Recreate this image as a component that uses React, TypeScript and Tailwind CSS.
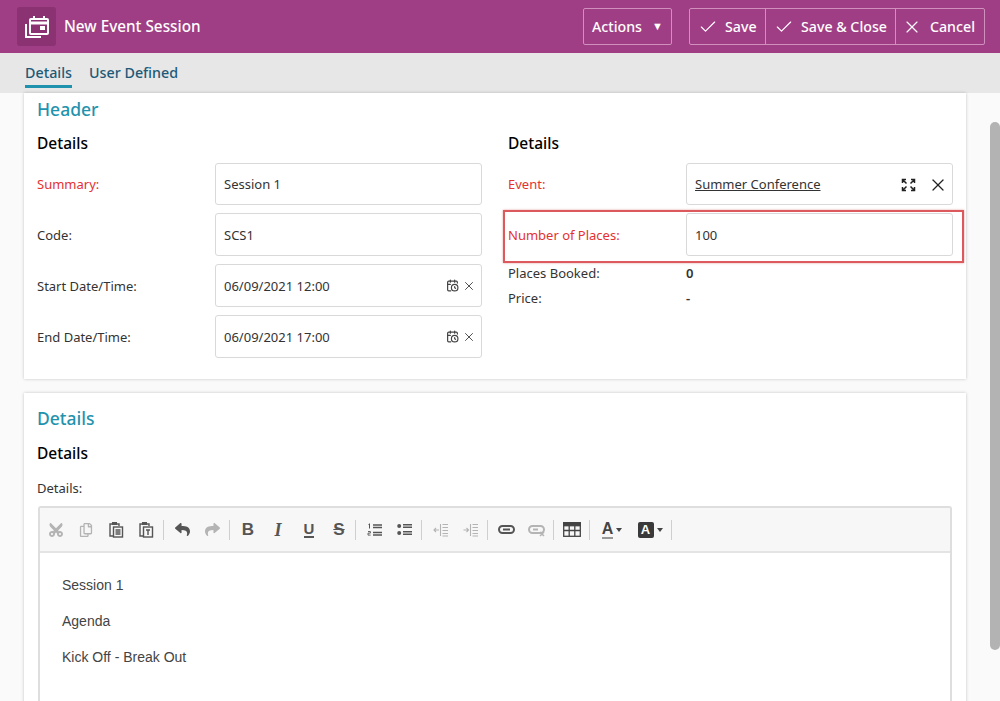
import React from "react";
import { Check, X, CalendarClock } from "lucide-react";
import { FaCut, FaRegCopy, FaReply, FaShare } from "react-icons/fa";

const Field = ({ label, red, first, children }: { label: string; red?: boolean; first?: boolean; children: React.ReactNode }) => (
  <div className={`flex items-center ${first ? "h-[42px]" : "h-[43px]"}`}>
    <div className={`w-[178px] text-[13px] ${first ? "pt-px" : "pt-[3px]"} ${red ? "text-[#e5312f]" : "text-[#333]"}`}>{label}</div>
    <div className={`w-[267px] h-full border border-[#d9d9d9] rounded-[3px] bg-white flex items-center pl-2 pr-2 text-[13px] text-[#333] ${first ? "pt-px" : "pt-[2px]"}`}>
      {children}
    </div>
  </div>
);

const DateField = ({ label, value }: { label: string; value: string }) => (
  <Field label={label}>
    <span className="flex-1">{value}</span>
    <CalendarClock size={13} strokeWidth={2.2} className="text-[#444] mr-[3px] -mt-[2px]" />
    <X size={14} strokeWidth={1.6} className="text-[#444] -mr-[3px] -mt-[2px]" />
  </Field>
);

const TopButton = ({ icon, text, cls }: { icon: React.ReactNode; text: string; cls: string }) => (
  <div className={`h-[37px] border border-[#d08fbd] flex items-center whitespace-nowrap text-[14.2px] font-medium text-white ${cls}`}>
    {icon}
    <span>{text}</span>
  </div>
);

const Btn = ({ children, faded }: { children: React.ReactNode; faded?: boolean }) => (
  <div className={`w-[30px] h-[30px] flex items-center justify-center ${faded ? "text-[#b4b4b4]" : "text-[#555]"}`}>{children}</div>
);
const Sep = () => <div className="w-px h-[20px] bg-[#cfcfcf] ml-[2px] mr-[3px]" />;

const Clipboard = ({ t }: { t?: boolean }) => (
  <svg width="16" height="17" viewBox="0 0 16 17" fill="none" stroke="currentColor" strokeWidth="1.4">
    <path d="M4 3H2v12h3" />
    <path d="M9 3h2v2" />
    <rect x="4" y="1" width="5" height="3" fill="currentColor" stroke="none" />
    <rect x="5.5" y="6" width="9" height="10" />
    {t ? <path d="M8 9h4M10 9v5" /> : <path d="M7.5 9h5M7.5 11h5M7.5 13h5" />}
  </svg>
);

const Table = () => (
  <svg width="18" height="15" viewBox="0 0 18 15" fill="none" stroke="currentColor" strokeWidth="1.3">
    <rect x="0.7" y="0.7" width="16.6" height="13.6" />
    <rect x="0.7" y="0.7" width="16.6" height="3" fill="currentColor" />
    <path d="M6.2 4v10M11.8 4v10M1 8.5h16" />
  </svg>
);

const ListOl = () => (
  <svg width="15" height="14" viewBox="0 0 15 14" fill="none" stroke="currentColor">
    <path d="M1.5 1.5l1-.7v4.7" strokeWidth="1" />
    <path d="M1 8.5h2.4v1.6H1v2h2.6" strokeWidth="0.9" />
    <path d="M6 2h9M6 4.6h9M6 9.4h9M6 12h9" strokeWidth="1.5" />
  </svg>
);

const ListUl = () => (
  <svg width="15" height="13" viewBox="0 0 15 13" fill="none" stroke="currentColor">
    <circle cx="2.2" cy="3" r="2" fill="currentColor" stroke="none" />
    <circle cx="2.2" cy="10" r="2" fill="currentColor" stroke="none" />
    <path d="M6 1.8h9M6 4.2h9M6 8.8h9M6 11.2h9" strokeWidth="1.5" />
  </svg>
);

const Indent = ({ out }: { out?: boolean }) => (
  <svg width="15" height="14" viewBox="0 0 15 14" fill="none" stroke="currentColor" strokeWidth="1.1">
    <path d="M7.5 1v12" />
    <path d="M9.5 1.5H15M9.5 4.5H15M9.5 7.5H15M9.5 10.5H15M9.5 13H15" />
    {out ? <path d="M6 7H1M3 5L1 7l2 2" /> : <path d="M0.5 7H5.5M3.5 5l2 2-2 2" />}
  </svg>
);

const LinkIcon = ({ un }: { un?: boolean }) => (
  <svg width="17" height="14" viewBox="0 0 17 14" fill="none" stroke="currentColor" strokeWidth="2">
    <rect x="1" y="3" width="15" height="7" rx="3.5" />
    {un ? <path d="M5 6.5h5" /> : <path d="M5 6.5h7" />}
    {un ? <path d="M12 9l4 4M16 9l-4 4" strokeWidth="1.5" /> : null}
  </svg>
);

const Caret = () => <span className="w-0 h-0 border-x-[3.5px] border-x-transparent border-t-[4px] border-t-[#444]" />;

export default function App() {
  return (
    <div className="h-[701px] w-[1000px] overflow-hidden flex flex-col bg-[#fafafa] font-['Noto_Sans','Open_Sans',sans-serif]">
      <header className="h-[53px] shrink-0 bg-[#a03e85] flex items-center pl-[17px] pr-[15px]">
        <div className="w-[39px] h-[39px] rounded-[3px] bg-[#8a3272] flex items-center justify-center">
          <svg width="26" height="26" viewBox="0 0 26 26" fill="none" stroke="white" strokeWidth="2">
            <path d="M2 10v13h15" />
            <rect x="6" y="5" width="18" height="15" rx="1" />
            <path d="M6 9h18" strokeWidth="3" />
            <path d="M10 2v4M20 2v4" />
            <rect x="16" y="12" width="5" height="4" fill="white" stroke="none" />
          </svg>
        </div>
        <div className="ml-2 text-[15.3px] font-medium text-white">New Event Session</div>
        <div className="flex-1" />
        <div className="h-[37px] w-[89px] border border-[#d08fbd] rounded-[2px] flex items-center pl-2 text-[14.2px] font-medium text-white mr-[17px]">
          Actions
          <span className="ml-[10px] text-[11px]">▼</span>
        </div>
        <TopButton cls="w-[77px] rounded-l-[2px] pl-[8px]" icon={<Check size={20} strokeWidth={1.4} className="mr-[7px]" />} text="Save" />
        <TopButton cls="w-[131px] -ml-px pl-[8px]" icon={<Check size={20} strokeWidth={1.4} className="mr-[7px]" />} text="Save & Close" />
        <TopButton cls="w-[90px] -ml-px rounded-r-[2px] pl-[6px]" icon={<X size={20} strokeWidth={1.4} className="mr-[8px]" />} text="Cancel" />
      </header>

      <nav className="h-[40px] shrink-0 bg-[#e7e7e7] flex items-start pl-[25px] gap-[17px] text-[14.3px] font-medium text-[#1c5a78]">
        <div className="h-[32px] mt-[3px] flex items-center border-b-[3px] border-[#1f93ad] pt-[4px]">Details</div>
        <div className="h-[32px] mt-[3px] flex items-center pt-[4px] pb-[2px]">User Defined</div>
      </nav>

      <div className="flex-1 flex min-h-0 pl-[24px] pr-0">
        <main className="w-[942px] shrink-0 flex flex-col gap-[14px]">
          <section className="h-[286px] shrink-0 bg-white shadow-[0_0_3px_rgba(0,0,0,0.22)] px-[13px] relative">
            <h2 className="text-[17.5px] font-medium text-[#1f93ad] h-[32px] flex items-center">Header</h2>
            <div className="flex gap-[26px]">
              <div className="w-[445px]">
                <h3 className="text-[15.5px] font-medium text-black h-[38px] flex items-center">Details</h3>
                <div className="flex flex-col gap-[8px]">
                  <Field first label="Summary:" red>Session 1</Field>
                  <Field label="Code:">SCS1</Field>
                  <DateField label="Start Date/Time:" value="06/09/2021 12:00" />
                  <DateField label="End Date/Time:" value="06/09/2021 17:00" />
                </div>
              </div>
              <div className="w-[445px] relative">
                <h3 className="text-[15.5px] font-medium text-black h-[38px] flex items-center">Details</h3>
                <div className="flex flex-col gap-[8px]">
                  <Field first label="Event:" red>
                    <span className="flex-1 underline">Summer Conference</span>
                    <svg width="15" height="14" viewBox="0 0 15 14" fill="none" stroke="#222" strokeWidth="1.5" className="mr-[12px]">
                      <path d="M1.5 5V1.5H5M10 1.5h3.5V5M1.5 9v3.5H5M10 12.5h3.5V9M2 2l3.5 3.5M13 2L9.5 5.5M2 12l3.5-3.5M13 12L9.5 8.5" />
                    </svg>
                    <X size={20} strokeWidth={1.5} className="text-[#222] -mr-[4px]" />
                  </Field>
                  <Field label="Number of Places:" red>100</Field>
                </div>
                <div className="flex items-center h-[25px] mt-[5px] text-[13px] text-[#333]">
                  <div className="w-[178px]">Places Booked:</div>
                  <div className="font-semibold">0</div>
                </div>
                <div className="flex items-center h-[25px] text-[13px] text-[#333]">
                  <div className="w-[178px]">Price:</div>
                  <div className="font-semibold">-</div>
                </div>
                <div className="absolute left-[-5px] top-[85px] w-[461px] h-[53px] border-2 border-[#dc5a5e] shadow-[0_0_2px_rgba(200,60,60,0.5)] pointer-events-none" />
              </div>
            </div>
          </section>

          <section className="flex-1 bg-white shadow-[0_0_3px_rgba(0,0,0,0.22)] px-[13px]">
            <h2 className="text-[17.5px] font-medium text-[#1f93ad] h-[50px] flex items-center">Details</h2>
            <h3 className="text-[15.5px] font-medium text-black h-[21px] flex items-center">Details</h3>
            <div className="text-[13px] text-[#333] h-[18px] mt-[16px] flex items-center">Details:</div>
            <div className="mt-[8px] ml-px w-[914px] h-[300px] border-2 border-b-0 border-[#dedede] rounded-t-[3px] flex flex-col">
              <div className="h-[45px] shrink-0 bg-[#f7f7f7] border-b-2 border-[#e4e4e4] flex items-center pl-[1px]">
                <Btn faded><FaCut size={16} className="-rotate-90" /></Btn>
                <Btn faded><FaRegCopy size={14} /></Btn>
                <Btn><Clipboard /></Btn>
                <Btn><Clipboard t /></Btn>
                <Sep />
                <Btn><FaReply size={15} /></Btn>
                <Btn faded><FaShare size={15} /></Btn>
                <Sep />
                <Btn><span className="font-['Liberation_Sans'] font-bold text-[17px] leading-none">B</span></Btn>
                <Btn><span className="font-['Liberation_Serif'] font-bold italic text-[18px] leading-none">I</span></Btn>
                <Btn><span className="font-['Liberation_Sans'] font-bold text-[15px] leading-[15px] border-b-2 border-[#555] ml-[2px]">U</span></Btn>
                <Btn><span className="font-['Liberation_Sans'] font-bold text-[17px] leading-none line-through ml-[2px]">S</span></Btn>
                <Sep />
                <Btn><ListOl /></Btn>
                <Btn><ListUl /></Btn>
                <Sep />
                <Btn faded><Indent out /></Btn>
                <Btn faded><Indent /></Btn>
                <Sep />
                <Btn><LinkIcon /></Btn>
                <Btn faded><LinkIcon un /></Btn>
                <Sep />
                <Btn><span className="text-[#444]"><Table /></span></Btn>
                <Sep />
                <div className="w-[38px] h-[30px] flex items-center justify-center gap-[3px] text-[#444]">
                  <span className="text-[16px] font-bold leading-none border-b-2 border-[#999] font-['Liberation_Sans']">A</span>
                  <Caret />
                </div>
                <div className="w-[38px] h-[30px] flex items-center justify-center gap-[3px] text-[#444]">
                  <span className="w-[16px] h-[16px] rounded-[2px] bg-[#3a3a3a] text-white text-[13px] font-bold flex items-center justify-center font-['Liberation_Sans']">A</span>
                  <Caret />
                </div>
                <Sep />
              </div>
              <div className="flex-1 bg-white pt-[24px] pl-[22px] text-[14px] text-[#444] font-['Liberation_Sans',Arial,sans-serif] flex flex-col gap-[20px] leading-[16px]">
                <p>Session 1</p>
                <p>Agenda</p>
                <p>Kick Off - Break Out</p>
              </div>
            </div>
          </section>
        </main>
        <div className="ml-[24px] w-[10px] shrink-0">
          <div className="mt-[29px] h-[528px] w-[10px] rounded-[5px] bg-[#b3b3b3]" />
        </div>
      </div>
    </div>
  );
}
